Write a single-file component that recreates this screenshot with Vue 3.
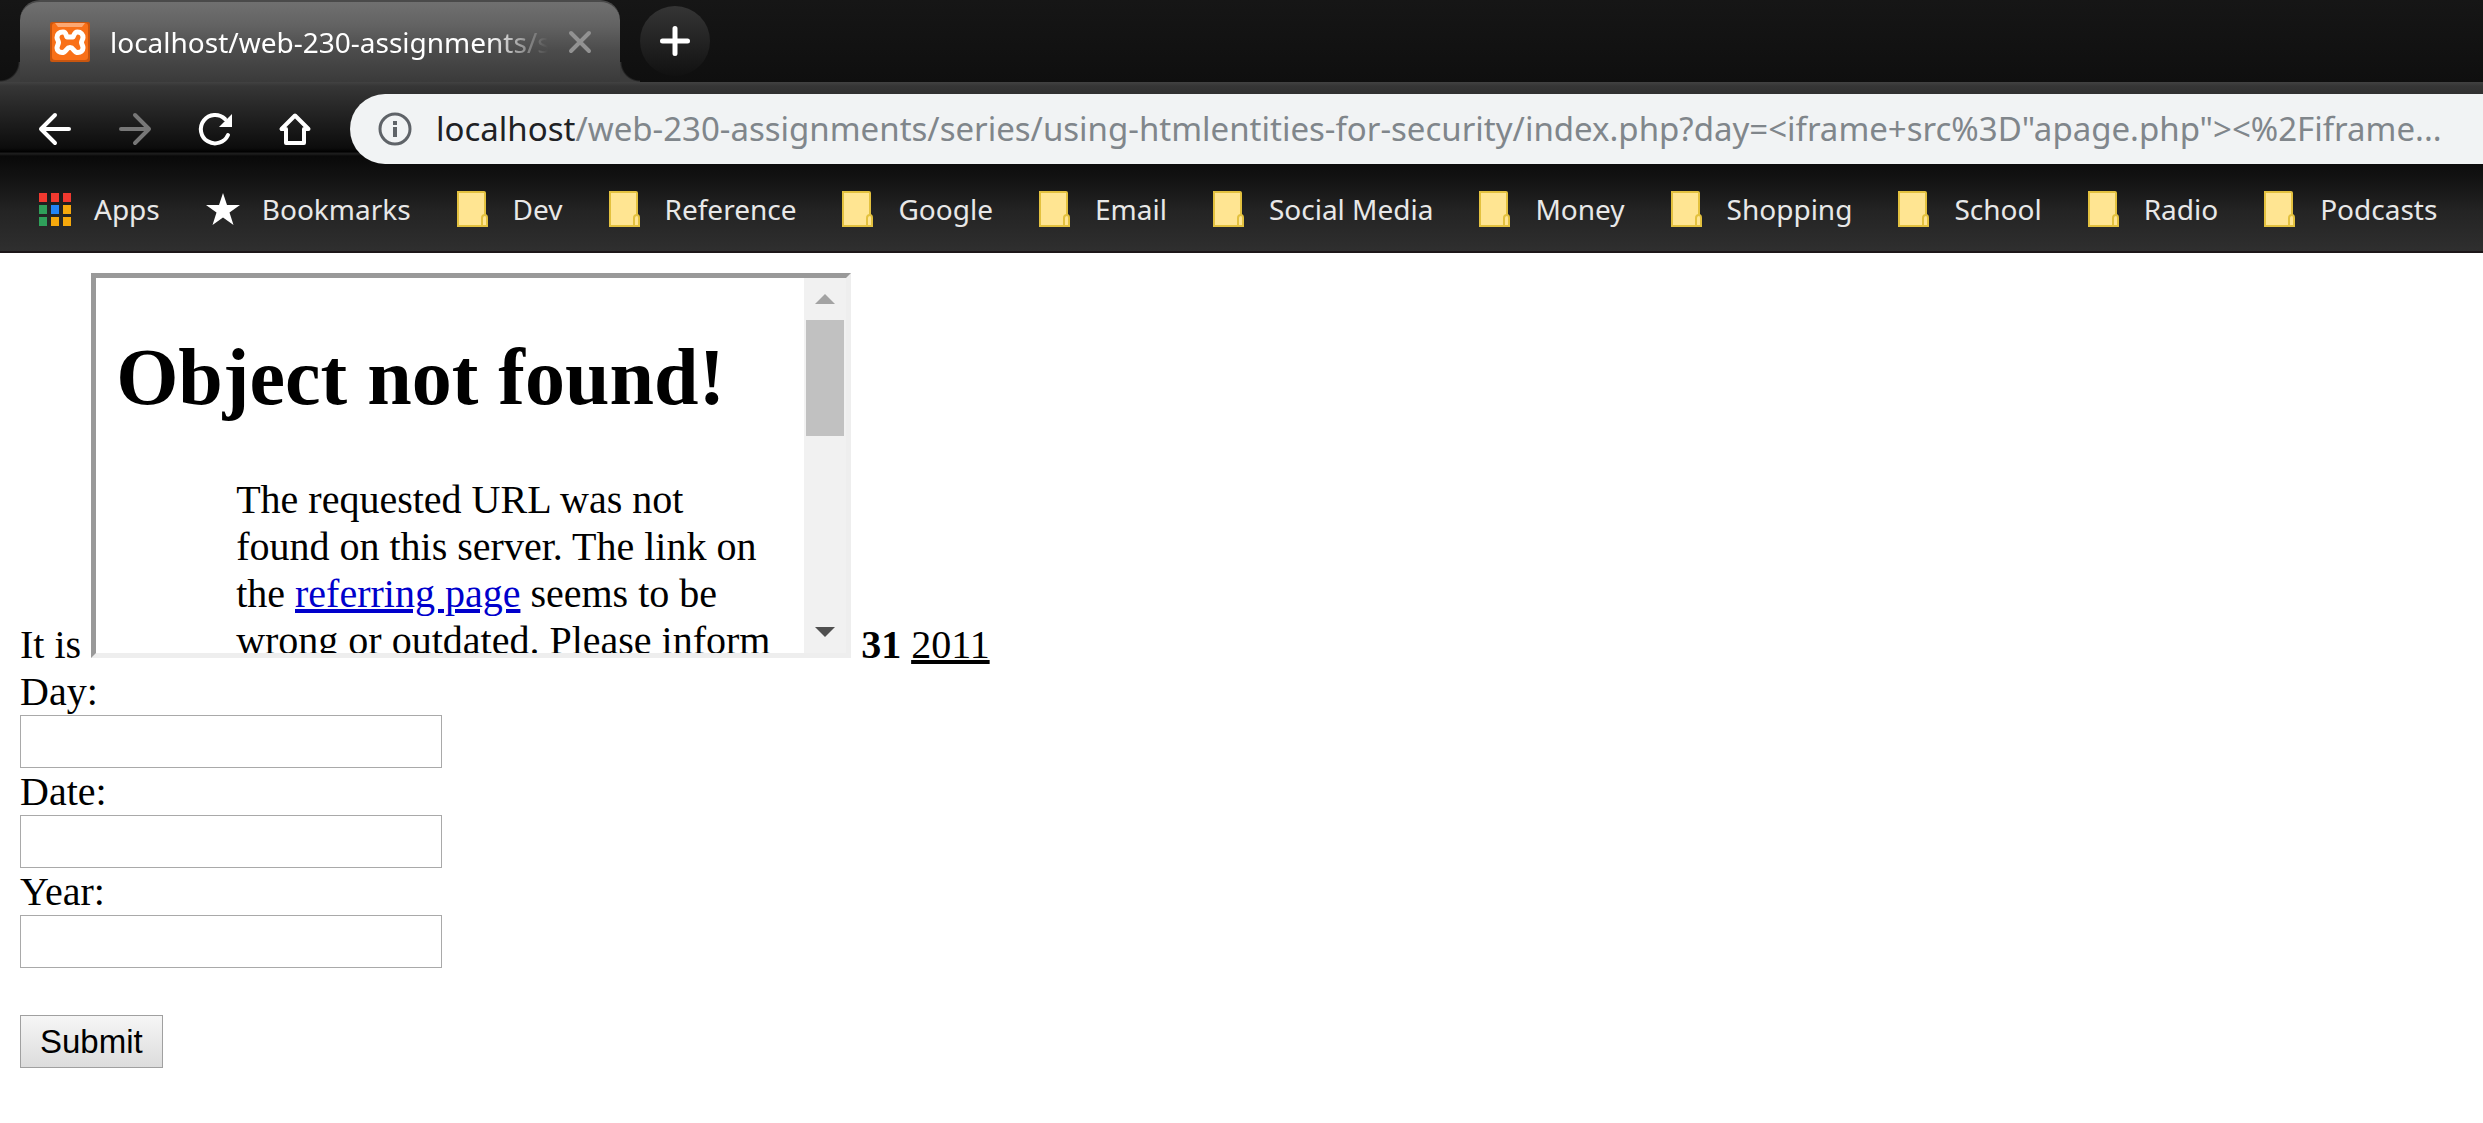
<script setup>
import { reactive } from 'vue'

const folders = ['Dev', 'Reference', 'Google', 'Email', 'Social Media', 'Money', 'Shopping', 'School', 'Radio', 'Podcasts']
const appColors = ['#f0392f', '#f0392f', '#f0392f', '#2fa05a', '#2384f5', '#f5a80c', '#2fa05a', '#f5a80c', '#f5a80c']
const fields = [
  { id: 'day', label: 'Day:' },
  { id: 'date', label: 'Date:' },
  { id: 'year', label: 'Year:' },
]
const form = reactive({ day: '', date: '', year: '' })
</script>

<template>
  <div class="window">
    <header class="chrome">
      <div class="tabstrip">
        <div class="tab">
          <svg class="favicon" viewBox="0 0 40 40" aria-hidden="true">
            <rect width="40" height="40" rx="2" fill="#c9560f" />
            <rect x="2" y="1" width="36" height="37" rx="3" fill="#f97018" />
            <path d="M5 1h30l-3 4H8z" fill="#fba873" />
            <path d="M13 10c-4 0-6 2.500-6 5.500 0 2 1.500 3 1.500 5s-1.500 3-1.500 5.500c0 3 2.500 4.500 5 4.500 4.500 0 4-5 8-5s3.500 5 8 5c2.500 0 5-1.500 5-4.500s-1.500-3.500-1.500-5.500 1.500-3 1.500-5c0-3-2-5.500-5.500-5.500-3.500 0-3.500 4-4.500 5h-6c-1-1-.5-5-4-5z" fill="none" stroke="#fff" stroke-width="5" stroke-linejoin="round" />
          </svg>
          <span class="tab-title">localhost/web-230-assignments/series</span>
          <button class="tab-close" type="button" aria-label="Close tab">
            <svg width="24" height="24" viewBox="0 0 24 24"><path d="M3 3l18 18M21 3L3 21" stroke="#929292" stroke-width="4" stroke-linecap="round" /></svg>
          </button>
        </div>
        <button class="new-tab" type="button" aria-label="New tab">
          <svg width="30" height="30" viewBox="0 0 30 30"><path d="M15 2.500v25M2.500 15h25" stroke="#fff" stroke-width="5" stroke-linecap="round" /></svg>
        </button>
      </div>

      <div class="bars">
        <nav class="toolbar">
          <div class="nav-group">
            <button class="nav-btn" type="button" aria-label="Back">
              <svg viewBox="0 0 40 40"><path d="M34 20H6M20 6L6 20l14 14" fill="none" stroke="#fff" stroke-width="4" stroke-linecap="round" stroke-linejoin="round" /></svg>
            </button>
            <button class="nav-btn" type="button" aria-label="Forward">
              <svg viewBox="0 0 40 40"><path d="M6 20h28M20 6l14 14-14 14" fill="none" stroke="#777" stroke-width="4" stroke-linecap="round" stroke-linejoin="round" /></svg>
            </button>
            <button class="nav-btn" type="button" aria-label="Reload">
              <svg viewBox="0 0 40 40"><path d="M33 26A14.200 14.200 0 1 1 30 10" fill="none" stroke="#fff" stroke-width="4" stroke-linecap="round" /><path d="M37 5v13H24z" fill="#fff" /></svg>
            </button>
            <button class="nav-btn" type="button" aria-label="Home">
              <svg viewBox="0 0 40 40"><path d="M20 6.500L6.500 20H11v14h18V20h4.500z" fill="none" stroke="#fff" stroke-width="4" stroke-linejoin="round" /></svg>
            </button>
          </div>
          <div class="omnibox">
            <svg class="info" viewBox="0 0 34 34" aria-hidden="true"><circle cx="17" cy="17" r="15" fill="none" stroke="#5f6368" stroke-width="3" /><path d="M17 15v10" stroke="#5f6368" stroke-width="4" /><path d="M17 9v4" stroke="#5f6368" stroke-width="4" /></svg>
            <span class="url"><span class="host">localhost</span>/web-230-assignments/series/using-htmlentities-for-security/index.php?day=&lt;iframe+src%3D"apage.php"&gt;&lt;%2Fiframe...</span>
          </div>
        </nav>
        <nav class="bookmarks">
          <a class="bookmark" href="#">
            <svg class="bm-icon" viewBox="0 0 34 36" aria-hidden="true">
              <rect v-for="(c, i) in appColors" :key="i" :x="(i % 3) * 12 + 1" :y="Math.floor(i / 3) * 12 + 2" width="8" height="9" :fill="c" />
            </svg>Apps
          </a>
          <a class="bookmark" href="#">
            <svg class="bm-icon" viewBox="0 0 34 36" aria-hidden="true"><path d="M17 2l4 12h13L23.500 21.500l4 12.500L17 26.500 6.500 34l4-12.500L0 14h13z" fill="#fff" /></svg>Bookmarks
          </a>
          <a v-for="name in folders" :key="name" class="bookmark" href="#">
            <svg class="bm-icon" viewBox="0 0 34 36" aria-hidden="true">
              <path d="M1 1h26q1 0 1 1v22q2 0 2 3v8H1z" fill="#ffe592" stroke="#e3c13f" stroke-width="2" />
              <path d="M25 34v-7q0-3 3-3" fill="none" stroke="#e3c13f" stroke-width="2" />
            </svg>{{ name }}
          </a>
        </nav>
      </div>
    </header>

    <main class="page">
      <div>
        It is
        <div class="frame">
          <div class="frame-row">
            <article class="frame-body">
              <h1>Object not found!</h1>
              <p>The requested URL was not found on this server. The link on the <a href="#">referring page</a> seems to be wrong or outdated. Please inform</p>
            </article>
            <div class="scrollbar">
              <button type="button" aria-label="Scroll up"><svg width="20" height="10"><path d="M10 0l10 10H0z" fill="#a3a3a3" /></svg></button>
              <div class="track"><div class="thumb"></div></div>
              <button type="button" aria-label="Scroll down"><svg width="20" height="10"><path d="M0 0h20L10 10z" fill="#505050" /></svg></button>
            </div>
          </div>
        </div> <b>31</b> <u>2011</u>
      </div>
      <form @submit.prevent>
        <div v-for="f in fields" :key="f.id" class="field">
          <label :for="f.id">{{ f.label }}</label>
          <input :id="f.id" v-model="form[f.id]" type="text" :name="f.id">
        </div>
        <button class="submit" type="submit">Submit</button>
      </form>
    </main>
  </div>
</template>

<style>
body {
  margin: 0;
  background: #fff;
}
</style>

<style scoped>
* {
  box-sizing: border-box;
}
button {
  padding: 0;
  border: 0;
  background: none;
  display: grid;
  place-items: center;
}
svg {
  display: block;
}
.window {
  overflow: hidden;
}
.chrome {
  font-family: "Noto Sans", "Open Sans", sans-serif;
  color: #e8e8e8;
}
.tabstrip {
  display: flex;
  align-items: center;
  gap: 20px;
  height: 82px;
  padding-left: 20px;
  background: linear-gradient(#161616, #0f0f0f);
}
.tab {
  position: relative;
  display: flex;
  align-items: center;
  width: 600px;
  height: 82px;
  padding: 0 28px 0 30px;
  border-top: 2px solid #4a4a4a;
  border-radius: 20px 20px 0 0;
  background: linear-gradient(#707070, #626262 30%, #4c4c4c 60%, #3a3a3a);
}
.tab::before,
.tab::after {
  content: "";
  position: absolute;
  bottom: 0;
  width: 20px;
  height: 20px;
}
.tab::before {
  right: 100%;
  background: radial-gradient(circle at 0 0, transparent 18px, #3c3c3c 20px);
}
.tab::after {
  left: 100%;
  background: radial-gradient(circle at 100% 0, transparent 18px, #3c3c3c 20px);
}
.favicon {
  flex: none;
  width: 40px;
  height: 40px;
}
.tab-title {
  flex: 1;
  min-width: 0;
  margin: 0 20px;
  overflow: hidden;
  color: #fff;
  font-size: 28px;
  line-height: 40px;
  white-space: nowrap;
  mask-image: linear-gradient(to right, #000 calc(100% - 60px), transparent);
}
.tab-close {
  width: 24px;
  height: 24px;
}
.new-tab {
  width: 70px;
  height: 70px;
  border-radius: 50%;
  background: linear-gradient(#353535, #111);
}
.bars {
  border-bottom: 2px solid #1c1618;
  background: linear-gradient(#424242 0, #363636 4px, #242424 30px, #0c0c0c 66px, #000 70px, #1c1c1c 71px, #1c1c1c 72px, #090909 74px, #141414 100px, #242424 130px, #2f2f2f 170px);
}
.toolbar {
  display: flex;
  align-items: center;
  gap: 35px;
  height: 94px;
  padding-left: 35px;
}
.nav-group {
  display: flex;
  gap: 40px;
}
.nav-btn,
.nav-btn svg {
  flex: none;
  width: 40px;
  height: 40px;
}
.omnibox {
  display: flex;
  flex: 1;
  align-items: center;
  gap: 24px;
  min-width: 0;
  height: 70px;
  padding-left: 28px;
  border-radius: 35px 0 0 35px;
  background: #f1f3f4;
}
.info {
  flex: none;
  width: 34px;
  height: 34px;
}
.url {
  color: #80868b;
  font-size: 33px;
  line-height: 48px;
  white-space: nowrap;
}
.host {
  color: #202124;
}
.bookmarks {
  display: flex;
  align-items: center;
  gap: 46px;
  height: 75px;
  padding: 0 0 10px 38px;
}
.bookmark {
  display: flex;
  flex: none;
  align-items: center;
  gap: 22px;
  color: #e8e8e8;
  font-size: 28px;
  line-height: 40px;
  text-decoration: none;
  white-space: nowrap;
}
.bm-icon {
  flex: none;
  width: 34px;
  height: 36px;
}
.page {
  padding: 20px;
  color: #000;
  font: 40px/47px "Liberation Serif", "Times New Roman", serif;
}
.frame {
  display: inline-block;
  width: 760px;
  overflow: hidden;
  border: 5px solid;
  border-color: #999 #eee #eee #999;
}
.frame-row {
  display: flex;
  height: 375px;
}
.frame-body {
  flex: 1;
  min-width: 0;
  padding: 0 20px;
}
.frame-body h1 {
  margin: 54px 0;
  font-size: 80px;
  line-height: 90px;
}
.frame-body p {
  margin: 0 0 0 120px;
}
.frame-body a {
  color: #0000cc;
  text-decoration-thickness: 4px;
}
.scrollbar {
  display: flex;
  flex-direction: column;
  width: 42px;
  background: #f1f1f1;
}
.scrollbar button {
  height: 42px;
}
.track {
  flex: 1;
  padding: 0 2px;
}
.thumb {
  height: 116px;
  background: #c1c1c1;
}
u {
  text-decoration-thickness: 4px;
}
.field label,
.field input {
  display: block;
}
.field label {
  width: fit-content;
}
.field input {
  width: 422px;
  height: 53px;
  padding: 2px 4px;
  border: 1px solid #a9a9a9;
  background: #fff;
  font: 33px "Liberation Sans", Arial, sans-serif;
}
.submit {
  margin-top: 47px;
  padding: 0 19px;
  height: 53px;
  border: 1px solid #a0a0a0;
  background: linear-gradient(#f6f6f6, #dcdcdc);
  color: #000;
  font: 33px "Liberation Sans", Arial, sans-serif;
}
</style>
